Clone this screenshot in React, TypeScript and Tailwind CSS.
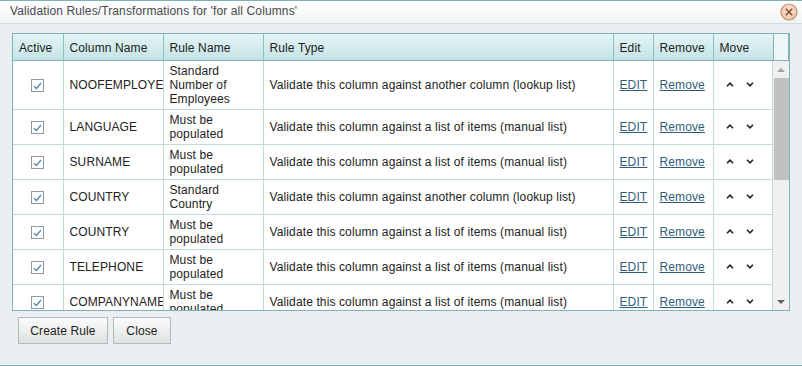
import React from 'react'

const rows = [
  { col: 'NOOFEMPLOYEE', rule: 'Standard Number of Employees', type: 'Validate this column against another column (lookup list)', tall: true },
  { col: 'LANGUAGE', rule: 'Must be populated', type: 'Validate this column against a list of items (manual list)' },
  { col: 'SURNAME', rule: 'Must be populated', type: 'Validate this column against a list of items (manual list)' },
  { col: 'COUNTRY', rule: 'Standard Country', type: 'Validate this column against another column (lookup list)' },
  { col: 'COUNTRY', rule: 'Must be populated', type: 'Validate this column against a list of items (manual list)' },
  { col: 'TELEPHONE', rule: 'Must be populated', type: 'Validate this column against a list of items (manual list)' },
  { col: 'COMPANYNAME', rule: 'Must be populated', type: 'Validate this column against a list of items (manual list)' },
]

const widths = [50, 100, 100, 350, 40, 60, 60]

function Cols() {
  return (
    <colgroup>
      {widths.map((w, i) => (
        <col key={i} style={{ width: w }} />
      ))}
    </colgroup>
  )
}

function Check() {
  return (
    <span className="inline-flex h-[13px] w-[13px] items-center justify-center border border-[#8e9a9f] bg-white">
      <svg width="9" height="8" viewBox="0 0 9 8">
        <path d="M1 4.2 L3.4 6.5 L8 1" fill="none" stroke="#4f86a8" strokeWidth="1.2" />
      </svg>
    </span>
  )
}

function Chevron({ up }: { up?: boolean }) {
  return (
    <svg width="8" height="5" viewBox="0 0 8 5">
      <path d={up ? 'M1 4.2 L4 1.2 L7 4.2' : 'M1 0.8 L4 3.8 L7 0.8'} fill="none" stroke="#222" strokeWidth="1.6" />
    </svg>
  )
}

function CloseIcon() {
  return (
    <svg width="18" height="18" viewBox="0 0 18 18">
      <defs>
        <radialGradient id="cg" cx="50%" cy="40%" r="60%">
          <stop offset="0%" stopColor="#fbe9dc" />
          <stop offset="100%" stopColor="#e9c2a6" />
        </radialGradient>
      </defs>
      <circle cx="9" cy="9" r="8" fill="url(#cg)" stroke="#c98f6e" strokeWidth="1.2" />
      <path d="M5.8 5.8 L12.2 12.2 M12.2 5.8 L5.8 12.2" stroke="#8a4a28" strokeWidth="1.6" />
    </svg>
  )
}

export default function App() {
  return (
    <div className="h-[366px] w-[802px] overflow-hidden border-t border-b border-[#7fb0b5] bg-[#eaf0f2] font-['Liberation_Sans',Arial,sans-serif] text-[12px] tracking-[0.12px] text-[#222]">
      {/* Title bar */}
      <div className="flex h-[23px] items-center justify-between border-b border-[#d6dcde] bg-gradient-to-b from-white to-[#f0f3f4] pl-[10px] pr-[4px]">
        <span className="relative top-[-1px] text-[12px] text-[#4a4a4a]">Validation Rules/Transformations for 'for all Columns'</span>
        <CloseIcon />
      </div>

      {/* Grid */}
      <div className="ml-[12px] mt-[9px] w-[778px] border border-[#7fb3b8] bg-white">
        <div className="flex h-[27px] border-b border-[#7fb3b8]">
          <table className="w-[760px] table-fixed border-collapse">
            <Cols />
            <thead>
              <tr className="h-[26px] bg-gradient-to-b from-[#e4f4f5] to-[#c4e3e5]">
                {['Active', 'Column Name', 'Rule Name', 'Rule Type', 'Edit', 'Remove', 'Move'].map((h, i) => (
                  <th key={h} className={`px-[6px] pt-[1px] text-left font-normal text-[#222] ${i < 6 ? 'border-r border-[#8fbfc4]' : ''}`}>
                    {h}
                  </th>
                ))}
              </tr>
            </thead>
          </table>
          <div className="w-[17px] border-x border-[#7fb3b8] bg-[#eff6f8]" />
        </div>

        <div className="flex h-[249px]">
          <div className="w-[760px] overflow-hidden">
            <table className="w-[760px] table-fixed border-collapse">
              <Cols />
              <tbody>
                {rows.map((r, i) => (
                  <tr key={i} className={`${r.tall ? 'h-[48px]' : 'h-[35px]'} border-b border-[#c5d8dc]`}>
                    <td className="border-r border-[#c5d8dc] text-center align-middle">
                      <span className="relative top-[1px]"><Check /></span>
                    </td>
                    <td className="overflow-hidden whitespace-nowrap border-r border-[#c5d8dc] pl-[6px] align-middle">{r.col}</td>
                    <td className="border-r border-[#c5d8dc] px-[6px] align-middle leading-[14px]">{r.rule}</td>
                    <td className="border-r border-[#c5d8dc] px-[6px] align-middle">{r.type}</td>
                    <td className="border-r border-[#c5d8dc] px-[6px] align-middle">
                      <a className="text-[#2f5e7c] underline">EDIT</a>
                    </td>
                    <td className="border-r border-[#c5d8dc] px-[6px] align-middle">
                      <a className="text-[#2f5e7c] underline">Remove</a>
                    </td>
                    <td className="align-middle">
                      <div className="flex items-center gap-[12px] pl-[12px]">
                        <Chevron up />
                        <Chevron />
                      </div>
                    </td>
                  </tr>
                ))}
              </tbody>
            </table>
          </div>
          {/* Scrollbar */}
          <div className="flex w-[17px] flex-col items-center border-l border-[#c5d8dc] bg-[#f0f0f0]">
            <div className="flex h-[17px] items-center justify-center">
              <span className="h-0 w-0 border-x-[4px] border-b-[4px] border-x-transparent border-b-[#a3a3a3]" />
            </div>
            <div className="h-[102px] w-[15px] bg-[#c1c1c1]" />
            <div className="flex-1" />
            <div className="flex h-[17px] items-center justify-center">
              <span className="h-0 w-0 border-x-[4px] border-t-[4px] border-x-transparent border-t-[#606060]" />
            </div>
          </div>
        </div>
      </div>

      {/* Buttons */}
      <div className="ml-[18px] mt-[6px] flex gap-[5px]">
        <button className="h-[27px] w-[90px] border border-[#b3b8b8] bg-gradient-to-b from-[#fbfbfb] to-[#dfe2e2] text-[12px] text-[#222]">Create Rule</button>
        <button className="h-[27px] w-[58px] border border-[#b3b8b8] bg-gradient-to-b from-[#fbfbfb] to-[#dfe2e2] text-[12px] text-[#222]">Close</button>
      </div>
    </div>
  )
}
